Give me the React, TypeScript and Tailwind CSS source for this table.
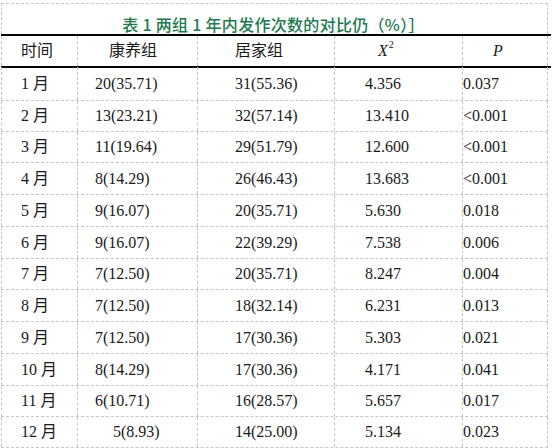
const rows = [
  { m: '1 月', a: '20(35.71)', b: '31(55.36)', x: '4.356', p: '0.037', h: 'h-[34px]' },
  { m: '2 月', a: '13(23.21)', b: '32(57.14)', x: '13.410', p: '<0.001', h: 'h-[31px]' },
  { m: '3 月', a: '11(19.64)', b: '29(51.79)', x: '12.600', p: '<0.001', h: 'h-[31px]' },
  { m: '4 月', a: '8(14.29)', b: '26(46.43)', x: '13.683', p: '<0.001', h: 'h-[32px]' },
  { m: '5 月', a: '9(16.07)', b: '20(35.71)', x: '5.630', p: '0.018', h: 'h-[32px]' },
  { m: '6 月', a: '9(16.07)', b: '22(39.29)', x: '7.538', p: '0.006', h: 'h-[32px]' },
  { m: '7 月', a: '7(12.50)', b: '20(35.71)', x: '8.247', p: '0.004', h: 'h-[31px]' },
  { m: '8 月', a: '7(12.50)', b: '18(32.14)', x: '6.231', p: '0.013', h: 'h-[32px]' },
  { m: '9 月', a: '7(12.50)', b: '17(30.36)', x: '5.303', p: '0.021', h: 'h-[32px]' },
  { m: '10 月', a: '8(14.29)', b: '17(30.36)', x: '4.171', p: '0.041', h: 'h-[32px]' },
  { m: '11 月', a: '6(10.71)', b: '16(28.57)', x: '5.657', p: '0.017', h: 'h-[31px]' },
  { m: '12 月', a: '5(8.93)', b: '14(25.00)', x: '5.134', p: '0.023', h: 'h-[31px]' },
];

const cell = 'flex items-center border-l border-dashed border-[#c6c6c6]';

export default function App() {
  return (
    <div className="w-[553px] h-[448px] overflow-hidden bg-white pt-[3px] pl-[1px] text-[16px] text-[#1a1a1a] [font-family:'Liberation_Serif','Noto_Sans_CJK_SC',serif]">
      <div className="w-[547px] h-[31px] border-t border-x border-dashed border-[#c6c6c6] flex items-center justify-center pr-[2px] pt-[10px]">
        <span className="font-medium tracking-[0.3px] text-[#217a4e] [font-family:'Noto_Sans_CJK_SC',sans-serif]">
          表 1 两组 1 年内发作次数的对比仍（%）］
        </span>
      </div>
      <div className="w-[550px] h-[2px] bg-black" />
      <div className="w-[547px] h-[30px] flex border-r border-dashed border-[#c6c6c6]">
        <div className={`${cell} w-[76px] pl-[19px]`}>时间</div>
        <div className={`${cell} w-[120px] pl-[31px]`}>康养组</div>
        <div className={`${cell} w-[137px] pl-[37px]`}>居家组</div>
        <div className={`${cell} w-[128px] pl-[43px] italic`}>
          X<sup className="text-[10px] not-italic -top-[6px] ml-[1px]">2</sup>
        </div>
        <div className={`${cell} w-[85px] pl-[30px] italic`}>P</div>
      </div>
      <div className="w-[550px] h-[2px] bg-black" />
      {rows.map((r, i) => (
        <div
          key={r.m}
          className={`w-[547px] ${r.h} flex border-r border-b border-dashed border-[#c6c6c6] ${i === 0 ? '-mt-[1px]' : ''}`}
        >
          <div className={`${cell} w-[76px] pl-[19px]`}>{r.m}</div>
          <div className={`${cell} w-[120px] ${r.a === '5(8.93)' ? 'pl-[35px]' : 'pl-[17px]'}`}>{r.a}</div>
          <div className={`${cell} w-[137px] pl-[37px]`}>{r.b}</div>
          <div className={`${cell} w-[128px] pl-[30px]`}>{r.x}</div>
          <div className={`${cell} w-[85px] pl-0`}>{r.p}</div>
        </div>
      ))}
    </div>
  );
}
